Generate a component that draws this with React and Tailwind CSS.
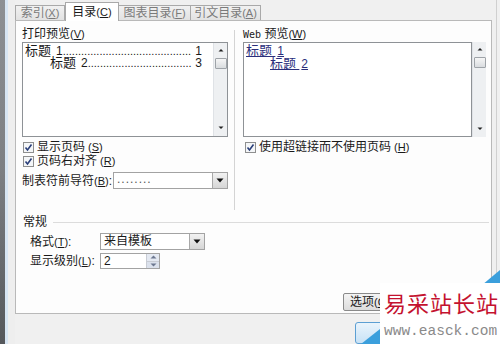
import React from 'react';

const font = { fontFamily: '"Liberation Sans", "Noto Sans CJK SC", sans-serif' };

const Acc = ({ k }) => (
  <span className="text-[11px]">(<u>{k}</u>)</span>
);

const Check = () => (
  <svg width="11" height="11" viewBox="0 0 11 11" className="shrink-0">
    <rect x="0.5" y="0.5" width="10" height="10" fill="#f4f6f8" stroke="#8e8f8f" />
    <path d="M2.5 5.5 L4.5 8 L8.5 2.5" fill="none" stroke="#2a3f7a" strokeWidth="1.6" />
  </svg>
);

const ScrollBar = () => (
  <div className="w-[14px] shrink-0 h-full bg-[#eef0f2] border-l border-[#dfe2e6] flex flex-col items-center">
    <svg width="14" height="12" viewBox="0 0 14 12" className="mt-[1px]">
      <path d="M4.5 7.5 L7 5 L9.5 7.5 Z" fill="#222" />
    </svg>
    <div className="w-[12px] h-[11px] mt-[2px] border border-[#9ea3a8] bg-gradient-to-b from-[#f6f6f6] to-[#d9dcdf] rounded-[1px]" />
    <div className="flex-1" />
    <svg width="14" height="12" viewBox="0 0 14 12" className="mb-[2px]">
      <path d="M4.5 4.5 L7 7 L9.5 4.5 Z" fill="#222" />
    </svg>
  </div>
);

const Dots = ({ n }) => (
  <span className="flex-1 min-w-0 whitespace-nowrap text-[11px] pr-[3px]">
    {'.'.repeat(n)}
  </span>
);

const DropBtn = () => (
  <div className="w-[15px] shrink-0 h-full bg-gradient-to-b from-[#f2f2f2] to-[#d6d6d6] border-l border-[#a8a8a8] flex items-center justify-center">
    <svg width="8" height="5" viewBox="0 0 8 5">
      <path d="M0.5 0.5 L7.5 0.5 L4 4.5 Z" fill="#111" />
    </svg>
  </div>
);

export default function App() {
  return (
    <div className="w-[500px] h-[344px] bg-[#f0f0f0] flex relative overflow-hidden text-[12px] text-[#1a1a1a]" style={font}>
      {/* window edge */}
      <div className="w-[5px] h-full bg-gradient-to-b from-[#8d9094] via-[#7c7f83] to-[#55585c]" />
      <div className="w-[3px] h-full bg-[#d7e5f3]" />
      <div className="w-[7px] h-full bg-[#eeeeee]" />

      <div className="w-[477px] flex flex-col">
        {/* tabs */}
        <div className="h-[20px] flex items-end">
          <div className="w-[50px] h-[15px] border border-b-0 border-[#a9a9a9] bg-gradient-to-b from-[#f1f1f1] to-[#e2e2e2] text-[#7a7a7a] flex items-center justify-center">
            索引<Acc k="X" />
          </div>
          <div className="w-[54px] h-[19px] -mb-px border border-b-0 border-[#a9a9a9] bg-white flex items-center justify-center relative z-10">
            目录<Acc k="C" />
          </div>
          <div className="w-[72px] h-[15px] border border-b-0 border-l-0 border-[#a9a9a9] bg-gradient-to-b from-[#f1f1f1] to-[#e2e2e2] text-[#7a7a7a] flex items-center justify-center">
            图表目录<Acc k="F" />
          </div>
          <div className="w-[70px] h-[15px] border border-b-0 border-l-0 border-[#a9a9a9] bg-gradient-to-b from-[#f1f1f1] to-[#e2e2e2] text-[#7a7a7a] flex items-center justify-center">
            引文目录<Acc k="A" />
          </div>
        </div>

        {/* panel */}
        <div className="h-[294px] border border-[#b9b9b9] bg-[#fdfdfd] flex flex-col">
          <div className="flex pl-[6px] pt-[5px] h-[189px]">
            {/* print preview */}
            <div className="w-[206px] shrink-0 flex flex-col">
              <div className="h-[16px] leading-[16px]">打印预览<Acc k="V" /></div>
              <div className="h-[95px] border border-[#8e9296] bg-white flex">
                <div className="flex-1 min-w-0 pt-[2px] pl-[2px] pr-[11px] text-[12px] leading-[12px]">
                  <div className="flex items-end"><span className="text-[13px]">标题</span><span className="ml-[5px]">1</span><Dots n={42} /><span>1</span></div>
                  <div className="flex items-end pl-[25px]"><span className="text-[13px]">标题</span><span className="ml-[5px]">2</span><Dots n={34} /><span>3</span></div>
                </div>
                <ScrollBar />
              </div>
              <div className="mt-[3px] h-[14px] flex items-center pl-[1px] gap-[3px] whitespace-nowrap"><Check />显示页码<Acc k="S" /></div>
              <div className="h-[14px] flex items-center pl-[1px] gap-[3px] whitespace-nowrap"><Check />页码右对齐<Acc k="R" /></div>
              <div className="mt-[4px] h-[17px] flex items-center">
                <span className="w-[91px] shrink-0 whitespace-nowrap">制表符前导符<Acc k="B" />:</span>
                <div className="flex-1 h-full border border-[#a3a3a3] bg-white flex">
                  <span className="flex-1 pl-[3px] leading-[12px] tracking-[1px] text-[#555]">........</span>
                  <DropBtn />
                </div>
              </div>
            </div>

            <div className="ml-[6px] mt-[4px] w-px h-[180px] bg-[#d4d4d4] shrink-0" />

            {/* web preview */}
            <div className="ml-[8px] w-[243px] shrink-0 flex flex-col">
              <div className="h-[16px] leading-[16px]"><span className="text-[10px]" style={{ fontFamily: '"DejaVu Sans Mono", monospace' }}>Web</span> 预览<Acc k="W" /></div>
              <div className="h-[95px] flex">
                <div className="flex-1 border border-[#8e9296] bg-white pt-[2px] pl-[2px] text-[#2b2f7c] leading-[12px]">
                  <div><span className="underline"><span className="text-[13px]">标题</span> <span className="ml-[2px]">1</span></span></div>
                  <div className="pl-[24px] mt-px"><span className="underline"><span className="text-[13px]">标题</span> <span className="ml-[2px]">2</span></span></div>
                </div>
                <ScrollBar />
              </div>
              <div className="mt-[3px] h-[14px] flex items-center pl-[2px] gap-[3px] whitespace-nowrap"><Check />使用超链接而不使用页码<Acc k="H" /></div>
            </div>
          </div>

          {/* general group */}
          <div className="h-[16px] flex items-center pl-[7px] mt-[4px]">
            <span>常规</span>
            <div className="flex-1 h-px bg-[#dcdcdc] ml-[6px] mr-[2px]" />
          </div>
          <div className="mt-[3px] h-[17px] flex items-center pl-[14px]">
            <span className="w-[70px] whitespace-nowrap">格式<Acc k="T" />:</span>
            <div className="w-[105px] h-full border border-[#a3a3a3] bg-white flex">
              <span className="flex-1 pl-[3px] leading-[15px]">来自模板</span>
              <DropBtn />
            </div>
          </div>
          <div className="mt-[3px] h-[16px] flex items-center pl-[14px]">
            <span className="w-[70px] whitespace-nowrap">显示级别<Acc k="L" />:</span>
            <div className="w-[60px] h-full border border-[#a3a3a3] bg-white flex">
              <span className="flex-1 pl-[3px] leading-[14px]">2</span>
              <div className="w-[13px] h-full flex flex-col border-l border-[#c8ccd4]">
                <div className="flex-1 bg-[#e4e9f2] flex items-center justify-center">
                  <svg width="7" height="4" viewBox="0 0 7 4"><path d="M0.5 3.5 L3.5 0.5 L6.5 3.5 Z" fill="#6d7890" /></svg>
                </div>
                <div className="flex-1 bg-[#dbe1ec] flex items-center justify-center border-t border-[#c8ccd4]">
                  <svg width="7" height="4" viewBox="0 0 7 4"><path d="M0.5 0.5 L6.5 0.5 L3.5 3.5 Z" fill="#6d7890" /></svg>
                </div>
              </div>
            </div>
          </div>
          <div className="mt-[24px] h-[18px] flex pl-[327px]">
            <div className="w-[37px] h-full overflow-hidden">
              <div className="w-[76px] h-full border border-[#8a8a8a] rounded-[2px] bg-gradient-to-b from-[#f4f4f4] to-[#dcdcdc] flex items-center pl-[6px] whitespace-nowrap">
                选项<Acc k="O" />...
              </div>
            </div>
          </div>
        </div>

        {/* bottom bar */}
        <div className="flex-1 flex pl-[340px] pt-[8px]">
          <div className="w-[70px] h-[22px] border border-[#5c9fd3] rounded-[3px] bg-gradient-to-b from-[#eaf4fc] to-[#c8e2f6]" />
        </div>
      </div>

      <div className="w-[5px] h-full bg-[#f0f0f0] border-r border-[#d0d0d0]" />

      {/* watermark */}
      <svg className="absolute left-[355px] top-[266px]" width="145" height="78" viewBox="0 0 145 78">
        <path d="M127 19 L145 4 L145 19 Z" fill="#3b9fdc" />
        <path d="M6 78 L25 63 L25 78 Z" fill="#3b9fdc" />
      </svg>
      <div className="absolute left-[380px] top-[283px] w-[120px] h-[61px] bg-white flex flex-col pl-[4px]">
        <div className="text-[22px] leading-[28px] mt-[5px] text-[#c4122f] tracking-[1px] whitespace-nowrap" style={{ fontFamily: '"Noto Sans CJK SC", sans-serif' }}>易采站长站</div>
        <div className="text-[14.5px] leading-[18px] mt-[6px] text-[#8a8a8a] whitespace-nowrap" style={{ fontFamily: '"Liberation Mono", monospace' }}>www.easck.com</div>
      </div>
    </div>
  );
}
